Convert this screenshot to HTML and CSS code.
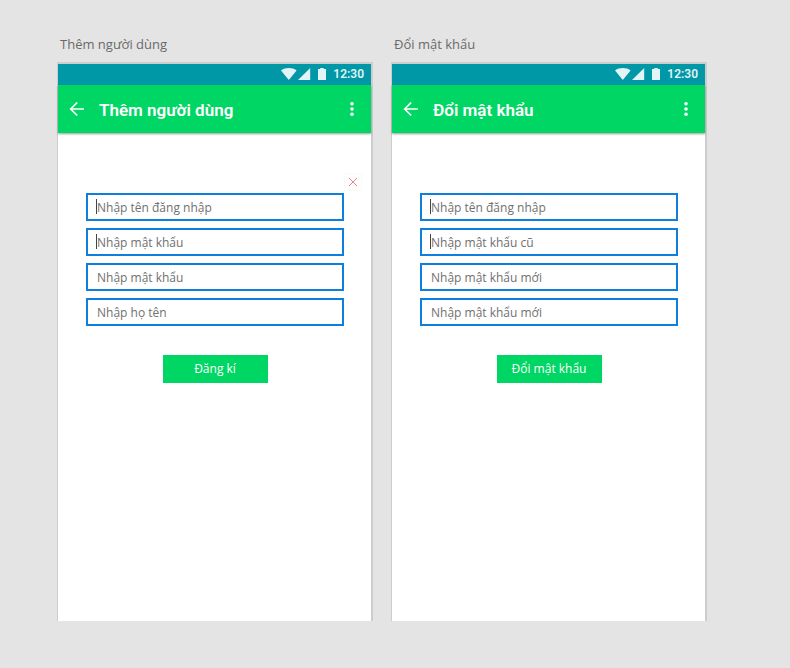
FILE: index.html
```html
<!DOCTYPE html>
<html lang="vi">
<head>
<meta charset="utf-8">
<meta name="viewport" content="width=device-width, initial-scale=1">
<title>Thêm người dùng – Đổi mật khẩu</title>
<link rel="stylesheet" href="styles.css">
</head>
<body>
<svg class="sprite" aria-hidden="true">
  <symbol id="status" viewBox="0 0 46 14">
    <path d="M0 3.4C4.4 .2 11.2 .2 15.6 3.4L7.800 13z"/>
    <path d="M17 13L29.200 1v12z"/>
    <path d="M37 2h2.200V1h3.600v1H45v11h-8z"/>
  </symbol>
  <symbol id="back" viewBox="0 0 16 16">
    <path d="M8.200 1.500L1.700 8l6.500 6.500M2 8h13" fill="none" stroke="currentColor" stroke-width="1.700"/>
  </symbol>
  <symbol id="more" viewBox="0 0 6 16">
    <circle cx="3" cy="2.700" r="1.800"/><circle cx="3" cy="8" r="1.800"/><circle cx="3" cy="13.300" r="1.800"/>
  </symbol>
</svg>
<main class="board">
  <section class="artboard">
    <h2 class="label">Thêm người dùng</h2>
    <div class="phone">
      <div class="status"><svg class="status-icons" aria-hidden="true"><use href="#status"/></svg><span>12:30</span></div>
      <header class="appbar">
        <button class="icon-button back" type="button" aria-label="Quay lại"><svg><use href="#back"/></svg></button>
        <h1 class="title">Thêm người dùng</h1>
        <button class="icon-button more" type="button" aria-label="Thêm tùy chọn"><svg><use href="#more"/></svg></button>
      </header>
      <form class="form">
        <div class="tools">
          <button class="close" type="button" aria-label="Đóng"><svg viewBox="0 0 10 10"><path d="M1 1l8 8M9 1L1 9"/></svg></button>
        </div>
        <div class="fields">
          <div class="field caret"><input type="text" aria-label="Nhập tên đăng nhập" placeholder="Nhập tên đăng nhập"></div>
          <div class="field caret"><input type="password" aria-label="Nhập mật khẩu" placeholder="Nhập mật khẩu"></div>
          <div class="field"><input type="password" aria-label="Nhập mật khẩu" placeholder="Nhập mật khẩu"></div>
          <div class="field"><input type="text" aria-label="Nhập họ tên" placeholder="Nhập họ tên"></div>
        </div>
        <button class="submit" type="button">Đăng kí</button>
      </form>
    </div>
  </section>
  <section class="artboard">
    <h2 class="label">Đổi mật khẩu</h2>
    <div class="phone">
      <div class="status"><svg class="status-icons" aria-hidden="true"><use href="#status"/></svg><span>12:30</span></div>
      <header class="appbar">
        <button class="icon-button back" type="button" aria-label="Quay lại"><svg><use href="#back"/></svg></button>
        <h1 class="title">Đổi mật khẩu</h1>
        <button class="icon-button more" type="button" aria-label="Thêm tùy chọn"><svg><use href="#more"/></svg></button>
      </header>
      <form class="form">
        <div class="tools"></div>
        <div class="fields">
          <div class="field caret"><input type="text" aria-label="Nhập tên đăng nhập" placeholder="Nhập tên đăng nhập"></div>
          <div class="field caret"><input type="password" aria-label="Nhập mật khẩu cũ" placeholder="Nhập mật khẩu cũ"></div>
          <div class="field"><input type="password" aria-label="Nhập mật khẩu mới" placeholder="Nhập mật khẩu mới"></div>
          <div class="field"><input type="password" aria-label="Nhập lại mật khẩu mới" placeholder="Nhập mật khẩu mới"></div>
        </div>
        <button class="submit" type="button">Đổi mật khẩu</button>
      </form>
    </div>
  </section>
</main>
</body>
</html>
```
FILE: styles.css
```css
* { box-sizing: border-box; }
body {
  margin: 0;
  background: #e4e4e4;
  font-family: "Open Sans", "Noto Sans", sans-serif;
}
button { border: 0; padding: 0; background: none; font: inherit; cursor: pointer; }
svg { display: block; }
.sprite { position: absolute; width: 0; height: 0; }
.board {
  display: grid;
  grid-template-columns: 1fr 1fr;
  gap: 18px;
  min-height: 100vh;
  padding: 34px 83px 47px 57px;
}
.artboard { display: flex; flex-direction: column; gap: 8px; }
.label {
  margin: 0;
  padding-left: 3px;
  font-size: 13px;
  line-height: 20px;
  font-weight: 400;
  color: #6a6a6a;
}
.phone {
  flex: 1;
  border: 1px solid #cdcdcd;
  border-top-width: 2px;
  border-right-width: 2px;
  border-bottom: 0;
  background: #fff;
}
.status {
  display: flex;
  align-items: center;
  justify-content: flex-end;
  gap: 6px;
  height: 21px;
  padding: 0 7px 1px 0;
  background: #0097a7;
  color: #e2f4f5;
  font: 600 12px/20px Roboto, sans-serif;
}
.status-icons { width: 46px; height: 14px; fill: currentColor; }
.appbar {
  display: flex;
  align-items: center;
  height: 48px;
  padding: 0 16px 0 11px;
  background: #00d664;
  box-shadow: 0 1px 2px rgba(0, 0, 0, .4);
  color: #fff;
}
.icon-button { color: #fff; fill: currentColor; }
.back svg { width: 16px; height: 16px; }
.more svg { width: 6px; height: 16px; }
.title {
  flex: 1;
  margin: 0;
  padding: 2px 0 0 14px;
  font: 600 17px/24px Roboto, sans-serif;
}
.form { padding: 38px 27px 0 28px; }
.tools { display: flex; align-items: center; justify-content: flex-end; height: 22px; margin-right: -18px; }
.close {
  display: grid;
  place-items: center;
  width: 18px;
  height: 18px;
  border: 1px solid #fafafa;
}
.close svg { width: 10px; height: 10px; fill: none; stroke: #f08585; stroke-width: 1; }
.fields { display: grid; gap: 7px; }
.field { position: relative; height: 28px; }
.field input {
  display: block;
  width: 100%;
  height: 100%;
  padding: 0 9px;
  border: 2px solid #0e7fdc;
  border-radius: 0;
  background: #fff;
  color: #666;
  font: 12px/20px "Open Sans", "Noto Sans", sans-serif;
}
.field input::placeholder { color: #707070; opacity: 1; }
.caret::before {
  content: "";
  position: absolute;
  left: 10px;
  top: 6px;
  width: 1px;
  height: 15px;
  background: #444;
}
.submit {
  display: block;
  width: 105px;
  height: 28px;
  margin: 29px auto 0;
  background: #00d664;
  color: #fff;
  font-size: 12px;
  line-height: 20px;
}
```
